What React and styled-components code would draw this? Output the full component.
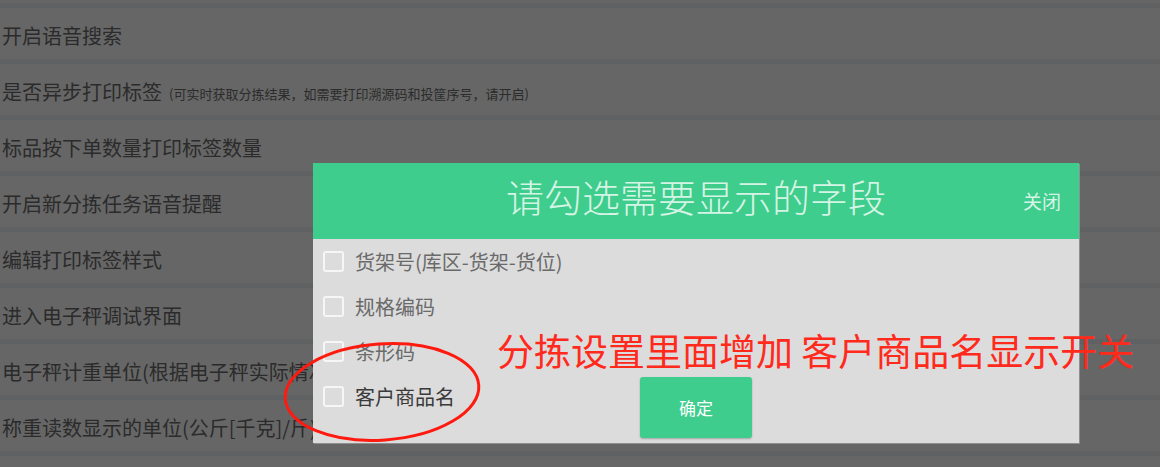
import styled, { createGlobalStyle } from "styled-components";

const GlobalStyle = createGlobalStyle`
  html, body {
    margin: 0;
    padding: 0;
    background: #666666;
  }
  body {
    font-family: "Noto Sans CJK SC", "Noto Sans", sans-serif;
  }
`;

const Screen = styled.div`
  position: relative;
  width: 1160px;
  height: 467px;
  overflow: hidden;
  background: #666666;
`;

const List = styled.div`
  padding-top: 3px;
`;

const Row = styled.div`
  display: flex;
  align-items: center;
  gap: 7px;
  height: 56px;
  padding: 5px 0 0 2px;
  box-sizing: border-box;
  border-top: 5px solid #5f6162;
  color: #2b2b2b;
  font-size: 20px;
  line-height: 24px;
  white-space: nowrap;
`;

const Note = styled.span`
  font-size: 13px;
  line-height: 16px;
  padding-top: 4px;
`;

const Dialog = styled.div`
  position: absolute;
  left: 313px;
  top: 163px;
  width: 766px;
  height: 280px;
  display: grid;
  grid-template-rows: 76px 1fr;
  background: #dcdcdc;
  box-shadow: 1px 1px 0 #8f8f8f;
`;

const Header = styled.div`
  display: grid;
  grid-template-columns: 1fr auto 1fr;
  align-items: center;
  background: #3ecd8c;
  color: rgba(255, 255, 255, 0.8);
`;

const Title = styled.div`
  grid-column: 2;
  font-size: 38px;
  font-weight: 300;
  line-height: 44px;
  padding-bottom: 10px;
`;

const Close = styled.div`
  grid-column: 3;
  justify-self: end;
  padding-right: 18px;
  font-size: 19px;
  line-height: 24px;
`;

const Body = styled.div`
  display: grid;
  padding: 0 0 5px;
`;

const Options = styled.div`
  grid-area: 1 / 1;
  display: flex;
  flex-direction: column;
  padding: 0 0 0 10px;
`;

const Option = styled.label`
  display: flex;
  align-items: center;
  gap: 11px;
  height: 45px;
  color: ${(p) => (p.$dark ? "#3a3a3a" : "#6a6a6a")};
  font-size: 20px;
  line-height: 24px;
`;

const Box = styled.span`
  width: 21px;
  height: 21px;
  box-sizing: border-box;
  border: 2px solid rgba(255, 255, 255, 0.75);
  border-radius: 3px;
`;

const Confirm = styled.button`
  grid-area: 1 / 1;
  align-self: end;
  justify-self: center;
  width: 112px;
  height: 61px;
  border: none;
  border-radius: 3px;
  background: #3ecd8c;
  color: #ffffff;
  font-family: inherit;
  font-size: 17px;
  box-shadow: 0 1px 2px rgba(0, 0, 0, 0.25);
`;

const Remark = styled.div`
  position: absolute;
  left: 497px;
  top: 328px;
  color: #ff2a1c;
  font-size: 37px;
  line-height: 44px;
  white-space: nowrap;
`;

const Circle = styled.svg`
  position: absolute;
  left: 280px;
  top: 340px;
  overflow: visible;
`;

const rows = [
  "开启语音搜索",
  "是否异步打印标签",
  "标品按下单数量打印标签数量",
  "开启新分拣任务语音提醒",
  "编辑打印标签样式",
  "进入电子秤调试界面",
  "电子秤计重单位(根据电子秤实际情况选择)",
  "称重读数显示的单位(公斤[千克]/斤)",
  "",
];

const options = ["货架号(库区-货架-货位)", "规格编码", "条形码", "客户商品名"];

export default function App() {
  return (
    <Screen>
      <GlobalStyle />
      <List>
        {rows.map((r, i) => (
          <Row key={i}>
            {r}
            {i === 1 && <Note>(可实时获取分拣结果，如需要打印溯源码和投筐序号，请开启)</Note>}
          </Row>
        ))}
      </List>

      <Dialog>
        <Header>
          <Title>请勾选需要显示的字段</Title>
          <Close>关闭</Close>
        </Header>
        <Body>
          <Options>
            {options.map((o, i) => (
              <Option key={o} $dark={i === 3}>
                <Box />
                {o}
              </Option>
            ))}
          </Options>
          <Confirm>确定</Confirm>
        </Body>
      </Dialog>

      <Remark>分拣设置里面增加 客户商品名显示开关</Remark>
      <Circle width="204" height="104" viewBox="0 0 204 104">
        <ellipse
          cx="102"
          cy="52"
          rx="97"
          ry="48"
          transform="rotate(-4 102 52)"
          fill="none"
          stroke="#ff1a10"
          strokeWidth="3"
        />
      </Circle>
    </Screen>
  );
}
